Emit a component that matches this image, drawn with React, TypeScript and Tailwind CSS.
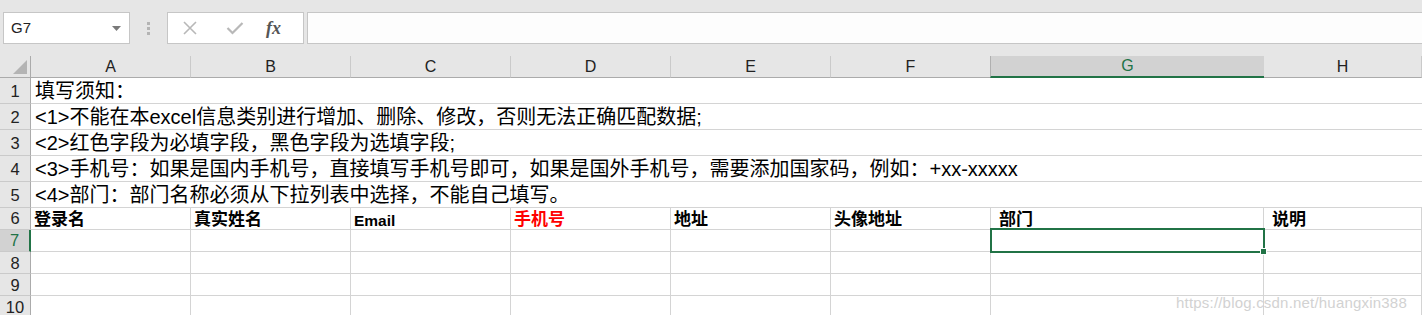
import React from "react";

const cols = ["A", "B", "C", "D", "E", "F", "G", "H"];

const notes: React.ReactNode[] = [
  "填写须知：",
  "<1>不能在本excel信息类别进行增加、删除、修改，否则无法正确匹配数据;",
  "<2>红色字段为必填字段，黑色字段为选填字段;",
  "<3>手机号：如果是国内手机号，直接填写手机号即可，如果是国外手机号，需要添加国家码，例如：+xx-xxxxx",
  "<4>部门：部门名称必须从下拉列表中选择，不能自己填写。",
];

const heads = ["登录名", "真实姓名", "Email", "手机号", "地址", "头像地址", "部门", "说明"];

export default function App() {
  return (
    <div className="relative w-[1422px] h-[315px] overflow-hidden bg-white font-['Liberation_Sans','Noto_Sans_CJK_SC',sans-serif] text-black">
      {/* formula bar */}
      <div className="h-[56px] bg-[#e6e6e6] flex items-start pt-[12px]">
        <div className="ml-[3px] w-[127px] h-[32px] border border-[#c6c6c6] bg-white flex items-center justify-between pl-[7px] pr-[8px]">
          <span className="text-[15px] text-[#222]">G7</span>
          <svg width="9" height="5" viewBox="0 0 9 5">
            <path d="M0 0 L9 0 L4.5 5 Z" fill="#7a7a7a" />
          </svg>
        </div>
        <div className="w-[37px] h-[32px] flex flex-col items-center justify-center gap-[2px]">
          <div className="w-[3px] h-[3px] bg-[#b4b4b4]" />
          <div className="w-[3px] h-[3px] bg-[#b4b4b4]" />
          <div className="w-[3px] h-[3px] bg-[#b4b4b4]" />
        </div>
        <div className="w-[137px] h-[32px] border border-[#c6c6c6] bg-white flex items-center">
          <svg className="ml-[14px]" width="16" height="16" viewBox="0 0 16 16">
            <path d="M2 2 L14 14 M14 2 L2 14" stroke="#b8b8b8" strokeWidth="1.6" />
          </svg>
          <svg className="ml-[28px]" width="18" height="14" viewBox="0 0 18 14">
            <path d="M1.5 7 L6.5 12 L16.5 2" stroke="#b8b8b8" strokeWidth="2.2" fill="none" />
          </svg>
          <span className="ml-[22px] text-[18px] italic font-bold text-[#555] font-['Liberation_Serif',serif] leading-none">fx</span>
        </div>
        <div className="ml-[3px] flex-1 h-[32px] border border-r-0 border-[#c6c6c6] bg-[#fdfdfd]" />
      </div>

      {/* sheet grid */}
      <div className="grid grid-cols-[31px_160px_160px_160px_160px_160px_160px_273px_1fr] grid-rows-[22px_26px_26px_26px_26px_26px_22px_22px_22px_22px_22px]">
        {/* header row */}
        <div className="bg-[#e6e6e6] border-b border-r border-[#ababab] relative">
          <svg className="absolute right-[3px] bottom-[3px]" width="14" height="14" viewBox="0 0 14 14">
            <path d="M14 0 L14 14 L0 14 Z" fill="#b4b4b4" />
          </svg>
        </div>
        {cols.map((c) =>
          c === "G" ? (
            <div
              key={c}
              className="bg-[#d2d2d2] border-l border-l-[#b0b0b0] border-b-2 border-b-[#217346] flex items-center justify-center text-[16px] text-[#217346] -ml-[1px]"
            >
              {c}
            </div>
          ) : (
            <div
              key={c}
              className="bg-[#e6e6e6] border-r border-r-[#cacaca] border-b border-b-[#ababab] flex items-center justify-center text-[16px] text-[#222] pt-[1px]"
            >
              {c}
            </div>
          )
        )}

        {/* rows 1-5 merged notes */}
        {notes.map((n, i) => (
          <React.Fragment key={i}>
            <div className="bg-[#e6e6e6] border-r border-r-[#ababab] border-b border-b-[#cacaca] flex items-center justify-center text-[16.5px] text-[#222] pt-[2px]">
              {i + 1}
            </div>
            <div className="col-span-8 border-b border-[#d4d4d4] flex items-center pl-[4px] pt-[1px] text-[20px] whitespace-nowrap leading-none">
              {n}
            </div>
          </React.Fragment>
        ))}

        {/* row 6 headings */}
        <div className="bg-[#e6e6e6] border-r border-r-[#ababab] border-b border-b-[#cacaca] flex items-center justify-center text-[16.5px] text-[#222]">
          6
        </div>
        {heads.map((h, i) => (
          <div
            key={h}
            className={`border-r border-b border-[#d4d4d4] flex items-end pb-[1px] font-bold whitespace-nowrap leading-none ${
              i === 2 ? "text-[15.5px]" : "text-[17px]"
            } ${i === 3 ? "text-[#ff0000]" : "text-black"} ${
              i === 6 ? "pl-[8px]" : i === 7 ? "pl-[8px]" : "pl-[3px]"
            }`}
          >
            {h}
          </div>
        ))}

        {/* rows 7-10 */}
        {[7, 8, 9, 10].map((r) => (
          <React.Fragment key={r}>
            {r === 7 ? (
              <div className="bg-[#d2d2d2] border-r-2 border-r-[#217346] border-b border-b-[#cacaca] flex items-center justify-center text-[16.5px] text-[#217346]">
                {r}
              </div>
            ) : (
              <div className="bg-[#e6e6e6] border-r border-r-[#ababab] border-b border-b-[#cacaca] flex items-center justify-center text-[16.5px] text-[#222] pt-[1px]">
                {r}
              </div>
            )}
            {cols.map((c) => (
              <div key={c} className="relative border-r border-b border-[#d4d4d4]">
                {r === 7 && c === "G" && (
                  <div className="absolute -left-[1px] -top-[2px] -right-[2px] -bottom-[2px] border-2 border-[#217346] z-10">
                    <div className="absolute -right-[4px] -bottom-[4px] w-[7px] h-[7px] bg-[#217346] border border-white" />
                  </div>
                )}
              </div>
            ))}
          </React.Fragment>
        ))}
      </div>

      {/* watermark */}
      <div className="absolute left-[1176px] top-[292px] text-[15px] text-[#d2d2d2] whitespace-nowrap tracking-[0.2px]">
        https://blog.csdn.net/huangxin388
      </div>
    </div>
  );
}
